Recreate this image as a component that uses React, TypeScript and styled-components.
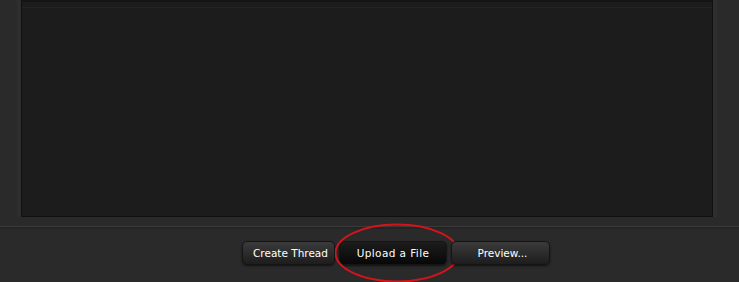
import styled, { createGlobalStyle } from 'styled-components'

const Global = createGlobalStyle`
  html, body {
    margin: 0;
    padding: 0;
    background: #2a2a2a;
    overflow: hidden;
  }
`

const Page = styled.div`
  width: 739px;
  height: 282px;
  background: #2a2a2a;
  display: flex;
  flex-direction: column;
`

const EditorFrame = styled.div`
  margin-left: 17px;
  width: 700px;
  height: 217px;
  box-sizing: border-box;
  border-left: 4px solid #2e2e2e;
  border-right: 4px solid #2e2e2e;
  display: flex;
`

const Editor = styled.div`
  flex: 1;
  box-sizing: border-box;
  background: #1c1c1c;
  border: 1px solid #101010;
  border-top: 2px solid #141414;
  display: flex;
  flex-direction: column;
`

const EditorTopLine = styled.div`
  height: 5px;
  border-bottom: 1px solid #232323;
`

const Separator = styled.div`
  margin-top: 9px;
  height: 1px;
  background: #3a3a3a;
  border-bottom: 2px solid #242424;
`

const ButtonRow = styled.div`
  display: flex;
  gap: 4px;
  margin-top: 12px;
  margin-left: 242px;
`

const Button = styled.button<{ $active?: boolean; $width: number }>`
  position: relative;
  width: ${({ $width }) => $width}px;
  height: 24px;
  box-sizing: border-box;
  padding: 0 0 0 ${({ $active }) => ($active ? 0 : 4)}px;
  border: 1px solid #151515;
  border-radius: 5px;
  background: ${({ $active }) =>
    $active
      ? 'linear-gradient(#1c1c1c, #080808)'
      : 'linear-gradient(#3b3b3b, #1d1d1d)'};
  box-shadow: 0 1px 2px rgba(0, 0, 0, 0.6);
  color: #ffffff;
  font-family: 'DejaVu Sans', Verdana, sans-serif;
  font-size: 10.5px;
  letter-spacing: ${({ $active }) => ($active ? 0.4 : 0)}px;
  line-height: 22px;
  text-align: center;
  white-space: nowrap;
  cursor: pointer;
`

const Ring = styled.svg`
  position: absolute;
  left: -5px;
  top: -19px;
  pointer-events: none;
`

export default function App() {
  return (
    <Page>
      <Global />
      <EditorFrame>
        <Editor>
          <EditorTopLine />
        </Editor>
      </EditorFrame>
      <Separator />
      <ButtonRow>
        <Button $width={93}>Create Thread</Button>
        <Button $width={108} $active>
          Upload a File
          <Ring width="126" height="60" viewBox="0 0 126 60">
            <ellipse cx="62" cy="30" rx="61.5" ry="28.5" fill="none" stroke="#d4141c" strokeWidth="2" />
          </Ring>
        </Button>
        <Button $width={99}>Preview...</Button>
      </ButtonRow>
    </Page>
  )
}
